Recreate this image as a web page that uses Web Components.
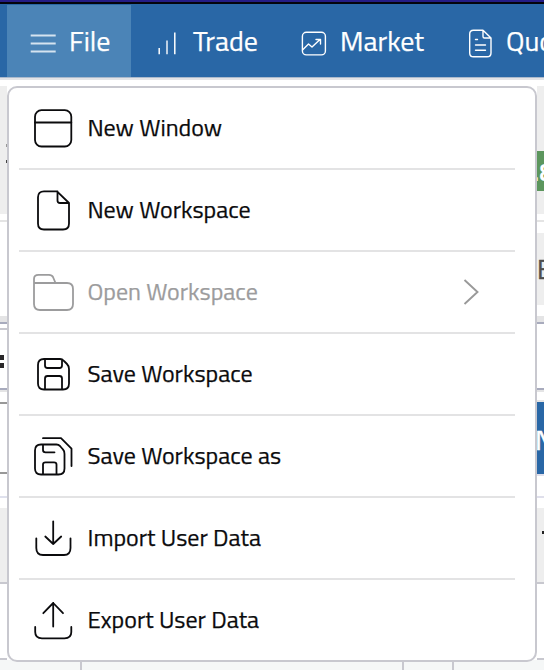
<!DOCTYPE html>
<html lang="en"><head><meta charset="utf-8"><title>File menu</title>
<style>
body{margin:0;width:544px;height:670px;overflow:hidden;background:#fff;font-family:"Titillium Web",Roboto,sans-serif;color:#0b0b0d}
</style></head><body>
<trading-app></trading-app>
<script>
const define=(name,html,after)=>customElements.define(name,class extends HTMLElement{
  connectedCallback(){
    if(this.shadowRoot)return;
    this.attachShadow({mode:'open'}).innerHTML=html;
    if(after)after.call(this,this.shadowRoot);
  }
});
const icons={
 menu:'<g stroke="#d5e3f0" stroke-width="1.8" stroke-linecap="butt"><path d="M2.700 9.500H27.700M2.700 17.500H27.700M2.700 25.500H27.700"/></g>',
 bars:'<g stroke-width="1.5" stroke-linecap="butt"><path d="M5.200 22V28.200"/><path d="M13 14.500V28.200" stroke="#bdd0e4" stroke-width="2"/><path d="M20.800 6.500V28.200"/></g>',
 chart:'<g stroke-width="1.4"><rect x="4.400" y="6.200" width="23" height="22.700" rx="4"/><path d="M5 23.500L10.500 18L14 21L22 13.500M18 13.500H22.500V18"/></g>',
 doc:'<g stroke-width="1.4"><path d="M9.500 4.200H19L27 12V27Q27 30.800 23 30.800H9.500Q5.700 30.800 5.700 27V8Q5.700 4.200 9.500 4.200M19 4.200V10.500Q19 12 20.500 12H27M11.500 13.500H13.500M11.500 19H21.500M11.500 24.300H21.500"/></g>',
 window:'<rect x="5" y="5.200" width="36.300" height="36.300" rx="6.500"/><path d="M5 17.500H41.300"/>',
 page:'<path d="M27 4.300H14Q8 4.300 8 10.300V36.500Q8 42.500 14 42.500H33Q39 42.500 39 36.500V16ZM27.500 4.500V13.500Q27.500 16 30 16H39"/>',
 folder:'<path d="M4 14V10Q4 5.900 8.500 5.900H19Q22 5.900 23 8L25.500 14H37Q43 14 43 20V35Q43 41 37 41H10Q4 41 4 35ZM4 14H26"/>',
 save:'<path d="M14 8H30Q32.200 8 34 10L37 13Q39 15 39 18V32.500Q39 38.500 33 38.500H14Q8 38.500 8 32.500V14Q8 8 14 8M15 8V14.500Q15 17 17.500 17H29.500Q32 17 32 14.500V8.500M15 38V27.500Q15 25 17.500 25H29.500Q32 25 32 27.500V38"/>',
 saveas:'<path d="M11 11.500H26.500Q28.500 11.500 30 13L33 16.500Q34.500 18 34.500 21V35.500Q34.500 41.500 28.500 41.500H11Q5 41.500 5 35.500V17.500Q5 11.500 11 11.500M13 12V17Q13 19.300 15.500 19.300H24.500M13 41V31.500Q13 29.300 15.500 29.300H24Q26.500 29.300 26.500 31.500V41M13 5.200H31L41.500 15.700V33"/>',
 import:'<path d="M23.200 6.300V29M15.300 21.500L23.200 29L31.200 21.500M6.300 23.300V33Q6.300 40 13 40H34Q40.500 40 40.500 33V23.300"/>',
 export:'<path d="M23.200 29.500V6M13.300 16.200L23.200 6L33 16.200M5.200 30V35Q5.200 41.300 12 41.300H34.500Q41.300 41.300 41.300 35V30"/>'
};
define('line-icon',`<style>:host{display:block;flex:none}svg{display:block}</style>`,function(r){
  const s=this.getAttribute('size');
  r.innerHTML+=`<svg width="${s}" height="${s}" viewBox="0 0 ${s} ${s}" fill="none" stroke="currentColor" stroke-width="1.8" stroke-linecap="round" stroke-linejoin="round">${icons[this.getAttribute('name')]}</svg>`;
});
define('fit-label',`<style>:host{display:block;white-space:nowrap;flex:none;-webkit-text-stroke:.25px currentColor}span{display:inline-block;position:relative;top:-1px;transform-origin:0 50%}</style><span><slot></slot></span>`,function(r){
  const w=+this.getAttribute('measure'),s=r.querySelector('span'),n=s.getBoundingClientRect().width;
  this.style.width=w+'px';
  if(Math.abs(w/n-1)>.03)s.style.transform=`scaleX(${w/n})`;
});
define('nav-item',`<style>:host{display:flex;box-sizing:border-box;height:73px;align-items:center;color:#fff;font-size:28px;flex:none;padding-top:2px}
:host([active]){background:#4b84b7;height:72px;margin-top:1px;padding-top:1px}</style><slot></slot>`);
define('menu-bar',`<style>:host{display:block;height:80px;overflow:hidden;background:#e3e4e7}
.top{height:2px;background:#241c85}.edge{height:2px;background:#04040c}
nav{display:flex;height:73px;background:#2967a6;border-bottom:1px solid #abbacd}
nav-item:nth-child(1){margin-left:7px;width:124px;padding-left:21px}
nav-item:nth-child(2){width:144px;padding-left:23px}
nav-item:nth-child(3){width:168px;padding-left:23px}
nav-item:nth-child(4){width:150px;padding-left:21px}
</style><div class="top"></div><div class="edge"></div><nav>
<nav-item active><line-icon name="menu" size="32"></line-icon><fit-label measure="42" style="margin-left:9px">File</fit-label></nav-item>
<nav-item><line-icon name="bars" size="32"></line-icon><fit-label measure="65" style="margin-left:7px">Trade</fit-label></nav-item>
<nav-item><line-icon name="chart" size="32"></line-icon><fit-label measure="85" style="margin-left:10px">Market</fit-label></nav-item>
<nav-item><line-icon name="doc" size="32"></line-icon><fit-label measure="84" style="margin-left:10px">Quotes</fit-label></nav-item>
</nav>`);
define('menu-entry',`<style>:host{display:flex;height:80px;align-items:center;border-bottom:2px solid #e3e3e4;padding-left:11px;font-size:24px}
:host([disabled]){color:#9c9c9d}:host(:last-of-type){border:0}
line-icon{margin-right:10.500px}svg{margin-left:auto;margin-right:34px}</style>
<slot></slot>`,function(r){
  r.querySelector('slot').insertAdjacentHTML('beforebegin',`<line-icon name="${this.getAttribute('icon')}" size="47"></line-icon>`);
  if(this.hasAttribute('submenu'))r.innerHTML+='<svg width="18" height="28" fill="none" stroke="#999" stroke-width="1.9"><path d="M1.500 2L14.500 14L1.500 26"/></svg>';
});
define('menu-panel',`<style>:host{display:block;position:absolute;left:7px;top:86px;box-sizing:border-box;width:530px;height:576px;background:#fff;border:2px solid #c8c8cf;border-radius:10px;padding:0 20px 0 10px}</style><slot></slot>`);
define('page-edge',`<style>:host{display:block;width:7px;overflow:hidden}div{overflow:hidden;white-space:nowrap}i{display:block}</style>`,function(r){
  const left=this.getAttribute('side')==='left';
  const rows=left?
  [[6,'#fff'],[128,'#eee','<p style="margin:58px 0 0 6px"><i style="width:1px;height:3px;background:#999;margin-bottom:13px"></i><i style="width:1px;height:3px;background:#444"></i></p>'],[6,'#fff'],[2,'#e4e4e4'],[94,'#fff'],[6,'#e4e4e5'],[2,'#a8abbd'],[4,'#fff'],[2,'#c8c8cf'],[58,'#fff','<p style="margin:25px 0 0"><i style="width:4px;height:5px;background:#292729;margin-bottom:3px"></i><i style="width:4px;height:5px;background:#292729"></i></p>'],[2,'#a8abbd'],[2,'#e4e4e5'],[10,'#fff'],[2,'#989898'],[68,'#fff'],[2,'#989898'],[22,'#fff'],[2,'#dfe1ed'],[10,'#fff'],[74,'#eee'],[2,'#c8c8cf'],[74,'#fff'],[2,'#c8c8cf']]:
  [[6,'#fff'],[65,'#eee'],[40,'#5c965d','<p style="margin:6px 0 0 -4px;font-size:26px;line-height:30px;font-weight:600;color:#fff">.8</p>'],[23,'#eee'],[6,'#fff'],[2,'#e4e4e4'],[11,'#fff'],[72,'#eee','<p style="margin:21px 0 0;font-size:27px;line-height:30px;color:#4d4d4d;-webkit-text-stroke:.5px">E</p>'],[11,'#fff'],[6,'#e4e4e5'],[2,'#a8abbd'],[64,'#fff'],[2,'#a8abbd'],[2,'#e4e4e5'],[8,'#fff'],[2,'#e4e4e5'],[72,'#2967a6','<p style="margin:23px 0 0 -2px;font-size:28px;line-height:30px;color:#fff;-webkit-text-stroke:.6px">N</p>'],[2,'#dfdfeb'],[20,'#fff'],[2,'#dfdfeb'],[10,'#fff'],[74,'#eee','<p style="width:2px;height:3px;background:#222;margin:23px 0 0 5px"></p>'],[2,'#c8c8cf'],[74,'#fff'],[2,'#c8c8cf']];
  r.innerHTML+=rows.map(([h,c,t=''])=>`<div style="height:${h}px;background:${c}">${t}</div>`).join('');
});
define('trading-app',`<style>:host{display:block;position:relative;height:670px}
main{display:flex;justify-content:space-between;height:580px}
footer{display:grid;grid-template-columns:82px 322px 50px 1fr;height:10px;background:#f5f7f7}
footer i{border-right:2px solid #c8c8cf}footer i:last-child{border:0}</style>
<menu-bar></menu-bar><main><page-edge side="left"></page-edge><page-edge side="right"></page-edge></main><footer><i></i><i></i><i></i><i></i></footer>
<menu-panel>
<menu-entry icon="window"><fit-label measure="135">New Window</fit-label></menu-entry>
<menu-entry icon="page"><fit-label measure="164">New Workspace</fit-label></menu-entry>
<menu-entry icon="folder" disabled submenu><fit-label measure="171">Open Workspace</fit-label></menu-entry>
<menu-entry icon="save"><fit-label measure="166">Save Workspace</fit-label></menu-entry>
<menu-entry icon="saveas"><fit-label measure="194">Save Workspace as</fit-label></menu-entry>
<menu-entry icon="import"><fit-label measure="175">Import User Data</fit-label></menu-entry>
<menu-entry icon="export"><fit-label measure="173">Export User Data</fit-label></menu-entry>
</menu-panel>`);
</script></body></html>
